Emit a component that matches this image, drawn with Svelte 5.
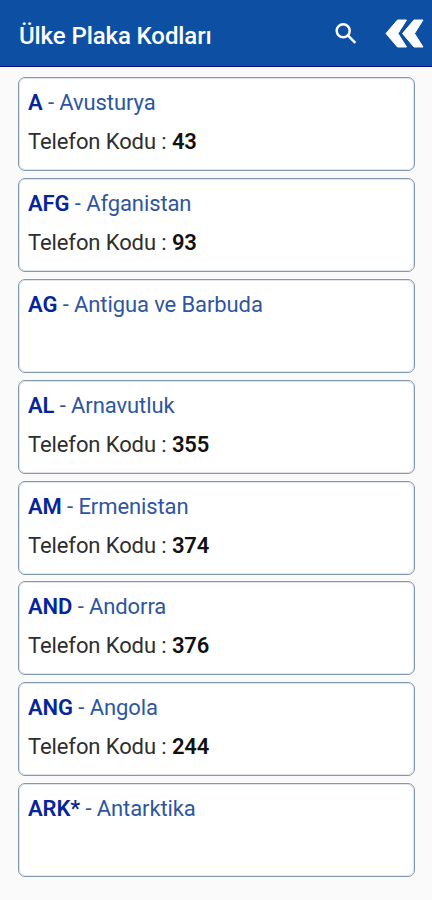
<script lang="ts">
  type Ulke = { kod: string; ad: string; telefon: string | null };

  const ulkeler: Ulke[] = [
    { kod: "A", ad: "Avusturya", telefon: "43" },
    { kod: "AFG", ad: "Afganistan", telefon: "93" },
    { kod: "AG", ad: "Antigua ve Barbuda", telefon: null },
    { kod: "AL", ad: "Arnavutluk", telefon: "355" },
    { kod: "AM", ad: "Ermenistan", telefon: "374" },
    { kod: "AND", ad: "Andorra", telefon: "376" },
    { kod: "ANG", ad: "Angola", telefon: "244" },
    { kod: "ARK*", ad: "Antarktika", telefon: null },
  ];
</script>

<div class="app">
  <header>
    <h1>Ülke Plaka Kodları</h1>
    <button class="search" aria-label="Ara">
      <svg viewBox="0 0 22 22" width="22" height="22">
        <circle cx="8.2" cy="7.8" r="6.5" />
        <path d="M12.8 12.4 L20.3 19.9" />
      </svg>
    </button>
    <button class="back" aria-label="Geri">
      <svg viewBox="0 0 39 29" width="39" height="29">
        <path d="M12.5 1 H21.5 L13 14.5 L21.5 28 H12.5 L1 14.5 Z" />
        <path d="M29 1 H38 L29.5 14.5 L38 28 H29 L17.5 14.5 Z" />
      </svg>
    </button>
  </header>

  <ul>
    {#each ulkeler as ulke}
      <li>
        <p class="country"><b>{ulke.kod}</b> - {ulke.ad}</p>
        {#if ulke.telefon}
          <p class="phone">Telefon Kodu : <b>{ulke.telefon}</b></p>
        {/if}
      </li>
    {/each}
  </ul>
</div>

<style>
  :global(body) {
    background-color: #fafafa;
  }

  .app {
    min-height: 900px;
    box-sizing: border-box;
    font-family: Roboto, sans-serif;
    background-color: #fafafa;
  }

  header {
    display: flex;
    align-items: center;
    height: 67px;
    box-sizing: border-box;
    padding: 1px 8px 0 19px;
    background-color: #0d4fa3;
    border-bottom: 1px solid #020e8e;
  }

  h1 {
    flex: 1;
    margin: 0;
    padding-top: 4px;
    font-size: 24px;
    font-weight: 500;
    line-height: 28px;
    letter-spacing: -0.1px;
    color: #fff;
  }

  button {
    display: flex;
    padding: 0;
    border: none;
    background: none;
    cursor: pointer;
  }

  .search {
    margin-right: 28px;
  }

  .search circle,
  .search path {
    fill: none;
    stroke: #fff;
    stroke-width: 2.5;
  }

  .back path {
    fill: #fff;
    stroke: #fff;
    stroke-width: 1;
    stroke-linejoin: round;
  }

  ul {
    display: flex;
    flex-direction: column;
    gap: 6.9px;
    margin: 0;
    padding: 10px 17px 0 18px;
    list-style: none;
  }

  li {
    height: 94px;
    box-sizing: border-box;
    padding: 11px 9px;
    background-color: #fff;
    border: 1px solid #8298ae;
    border-radius: 7px;
    box-shadow: inset 0 0 0 1px #dfe5eb;
  }

  p {
    margin: 0;
    font-size: 22px;
    line-height: 28px;
    letter-spacing: -0.1px;
    white-space: nowrap;
  }

  b {
    font-weight: 600;
  }

  .country {
    color: #2e569f;
  }

  .country b {
    color: #06259a;
  }

  .phone {
    margin-top: 11px;
    color: #2e2e2e;
  }

  .phone b {
    color: #111;
  }
</style>
